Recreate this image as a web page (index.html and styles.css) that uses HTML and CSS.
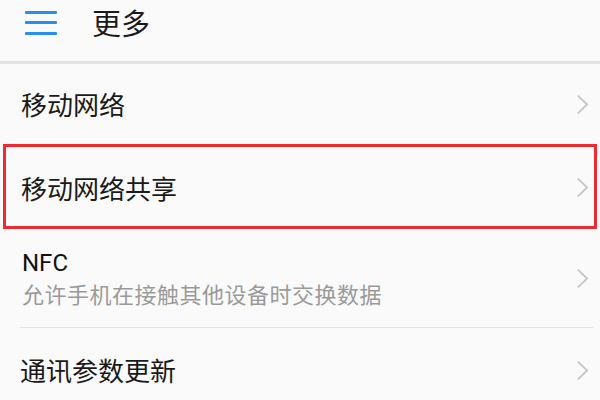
FILE: index.html
```html
<!DOCTYPE html>
<html lang="zh">
<head>
<meta charset="utf-8">
<title>更多</title>
<link rel="stylesheet" href="styles.css">
</head>
<body>
<div class="screen">
  <header class="topbar">
    <span class="menu" aria-label="menu"><i></i><i></i><i></i></span>
    <h1 class="title">更多</h1>
  </header>
  <ul class="list">
    <li class="row">
      <div class="texts"><span class="label">移动网络</span></div>
      <svg class="chev" viewBox="0 0 14 22"><path d="M2 1.5 L12 11 L2 20.5"/></svg>
    </li>
    <li class="row row-marked">
      <div class="texts"><span class="label">移动网络共享</span></div>
      <svg class="chev" viewBox="0 0 14 22"><path d="M2 1.5 L12 11 L2 20.5"/></svg>
    </li>
    <li class="row row-tall">
      <div class="texts">
        <span class="label label-latin">NFC</span>
        <span class="sub">允许手机在接触其他设备时交换数据</span>
      </div>
      <svg class="chev" viewBox="0 0 14 22"><path d="M2 1.5 L12 11 L2 20.5"/></svg>
    </li>
    <li class="row row-last">
      <div class="texts"><span class="label">通讯参数更新</span></div>
      <svg class="chev" viewBox="0 0 14 22"><path d="M2 1.5 L12 11 L2 20.5"/></svg>
    </li>
  </ul>
</div>
</body>
</html>
```

FILE: styles.css
```css
html, body {
  margin: 0;
  padding: 0;
  background: #fafafa;
}
body {
  font-family: Roboto, "Noto Sans CJK SC", sans-serif;
  color: #1a1a1a;
}
.screen {
  width: 600px;
  height: 400px;
  overflow: hidden;
}
.topbar {
  display: flex;
  align-items: center;
  padding-left: 25px;
  border-bottom: 3px solid #e2e2e2;
  box-sizing: border-box;
  height: 64px;
  padding-bottom: 16px;
}
.menu {
  width: 32px;
  height: 24px;
  display: flex;
  flex-direction: column;
  justify-content: space-between;
}
.menu i {
  display: block;
  height: 3px;
  background: #2a8ef0;
  border-radius: 1px;
}
.title {
  margin: 0 0 0 35px;
  font-size: 29px;
  font-weight: 400;
  color: #1a1a1a;
  line-height: 1;
  font-family: "Noto Sans CJK SC", sans-serif;
}
.list {
  list-style: none;
  margin: 0;
  padding: 0;
}
.row {
  display: flex;
  align-items: center;
  justify-content: space-between;
  height: 80px;
  padding: 0 11px 0 21px;
  box-sizing: border-box;
}
.row-marked {
  height: 85px;
  margin: 0 3px;
  padding-left: 15px;
  padding-right: 5px;
  border: 3px solid #ee2a30;
  padding-top: 2px;
}
.row-tall {
  height: 99px;
  margin-left: 20px;
  margin-right: 7px;
  padding-left: 2px;
  padding-right: 4px;
  border-bottom: 1px solid #e4e4e4;
  padding-top: 0;
}
.row-last {
  height: 84px;
  padding-top: 0;
  padding-left: 20px;
}
.texts {
  display: flex;
  flex-direction: column;
}
.label {
  font-size: 26px;
  line-height: 32px;
  font-family: "Noto Sans CJK SC", sans-serif;
  color: #1a1a1a;
}
.label-latin {
  font-family: Roboto, sans-serif;
  font-size: 24px;
  line-height: 30px;
  color: #111;
}
.sub {
  font-size: 22px;
  line-height: 30px;
  color: #9a9a9a;
  letter-spacing: 0.5px;
  font-family: "Noto Sans CJK SC", sans-serif;
}
.chev {
  width: 13px;
  height: 21px;
  flex: none;
}
.chev path {
  fill: none;
  stroke: #c6c6c6;
  stroke-width: 2;
}
```
